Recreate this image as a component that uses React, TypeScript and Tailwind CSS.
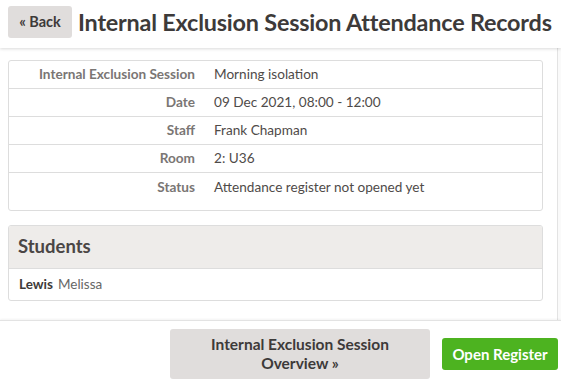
import React from "react";

const rows: [string, string][] = [
  ["Internal Exclusion Session", "Morning isolation"],
  ["Date", "09 Dec 2021, 08:00 - 12:00"],
  ["Staff", "Frank Chapman"],
  ["Room", "2: U36"],
  ["Status", "Attendance register not opened yet"],
];

export default function App() {
  return (
    <div className="w-[561px] h-[387px] bg-white flex flex-col overflow-hidden text-[#555] font-['Lato','Liberation_Sans',sans-serif]">
      <header className="h-[48px] shrink-0 flex items-start gap-[6px] px-[8px] pt-[6px] shadow-[0_1px_3px_rgba(0,0,0,0.15)] relative z-10">
        <button className="h-[32px] w-[64px] rounded-[3px] bg-[#e0dddc] text-[#3d3a39] font-bold text-[14.5px]">« Back</button>
        <h1 className="text-[23.4px] font-bold text-[#3d3a39] leading-[32px] whitespace-nowrap tracking-[-0.2px]">Internal Exclusion Session Attendance Records</h1>
      </header>
      <main className="flex-1 flex">
        <div className="flex-1 flex flex-col gap-[14px] pt-[12px] pl-[8px] pr-[14px]">
          <div className="border border-[#ddd] rounded-[3px] pb-[9px]">
            {rows.map(([k, v], i) => (
              <div key={k} className={`flex h-[28px] items-center text-[13.6px] ${i < rows.length - 1 ? "border-b border-[#ddd]" : ""}`}>
                <div className="w-[186px] text-right font-bold text-[#7a7674] whitespace-nowrap">{k}</div>
                <div className="pl-[19px] text-[#4f4b49]">{v}</div>
              </div>
            ))}
          </div>
          <div className="border border-[#ddd] rounded-[3px] overflow-hidden">
            <div className="h-[43px] bg-[#eeecea] border-b border-[#ddd] flex items-center px-[9px]">
              <span className="text-[18.5px] font-bold text-[#4a4645]">Students</span>
            </div>
            <div className="h-[31px] flex items-center px-[10px] text-[13.5px] gap-[5px]">
              <span className="font-bold text-[#3d3a39]">Lewis</span>
              <span className="text-[#666]">Melissa</span>
            </div>
          </div>
        </div>
        <div className="w-[4px] border-l border-[#e3e3e3] bg-[#fafafa]" />
      </main>
      <footer className="h-[67px] shrink-0 border-t border-[#e3e3e3] shadow-[0_-1px_2px_rgba(0,0,0,0.05)] flex items-center justify-end gap-[12px] pr-[3px]">
        <button className="w-[260px] h-[50px] rounded-[3px] bg-[#e0dddc] text-[#3d3a39] font-bold text-[15.5px] leading-[19px]">
          Internal Exclusion Session
          <br />
          Overview »
        </button>
        <button className="w-[116px] h-[32px] rounded-[3px] bg-[#4db320] text-white font-bold text-[15px]">Open Register</button>
      </footer>
    </div>
  );
}
